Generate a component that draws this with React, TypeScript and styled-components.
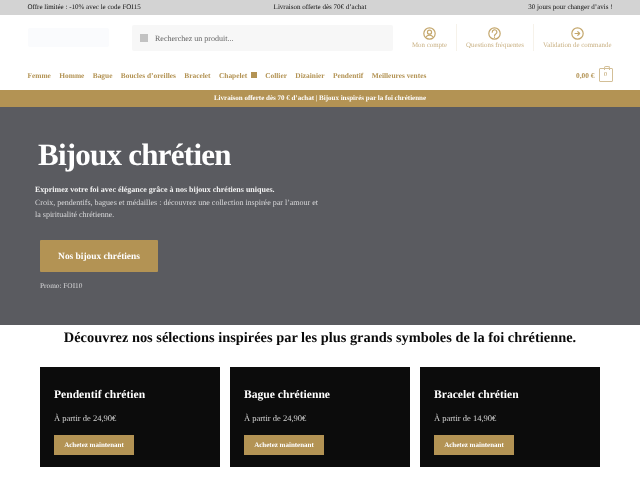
import React from "react";
import styled, { createGlobalStyle } from "styled-components";

const gold = "#b39354";

const Global = createGlobalStyle`
  html, body { margin: 0; padding: 0; background: #fff; height: 480px; overflow: hidden; }
  body { font-family: "Liberation Serif", "Times New Roman", serif; text-rendering: geometricPrecision; }
  * { box-sizing: border-box; }
`;

const Page = styled.div`
  width: 640px;
  height: 480px;
  overflow: hidden;
  filter: blur(0.3px);
`;

const TopBar = styled.div`
  height: 15px;
  background: #d3d3d3;
  padding: 0 27.5px;
  display: grid;
  grid-template-columns: 1fr 1fr 1fr;
  align-items: center;
  font-size: 7px;
  line-height: 15px;
  color: #111;
`;

const TopItem = styled.span<{ $align: string }>`
  text-align: ${(p) => p.$align};
`;

const Header = styled.div`
  height: 45px;
  padding: 9px 27.5px 0;
  display: flex;
  align-items: flex-start;
`;

const Logo = styled.div`
  width: 81px;
  height: 19px;
  margin-top: 4px;
  background: #fafbfd;
  border-radius: 2px;
`;

const Search = styled.div`
  width: 261px;
  height: 25.5px;
  margin: 1px 0 0 23.5px;
  background: #f7f7f7;
  border-radius: 2px;
  display: flex;
  align-items: center;
  padding-left: 8px;
  gap: 7px;
  font-size: 8px;
  color: #666;
`;

const SearchIcon = styled.span`
  width: 8px;
  height: 8px;
  background: #c2c2c2;
`;

const SearchText = styled.span`
  padding-top: 1px;
`;

const Links = styled.div`
  margin-left: auto;
  display: flex;
  height: 27px;
`;

const LinkItem = styled.div<{ $divided?: boolean }>`
  display: flex;
  flex-direction: column;
  align-items: center;
  padding: 2.5px 9px 0;
  border-left: ${(p) => (p.$divided ? "1px solid #f6f2ea" : "none")};
  font-size: 6.9px;
  line-height: 10px;
  color: #c9b184;
  gap: 1.5px;
  white-space: nowrap;
  &:last-child {
    padding-right: 1px;
  }
`;

const Nav = styled.div`
  height: 30px;
  padding: 0 27.5px;
  display: flex;
  align-items: center;
  font-size: 7.4px;
  font-weight: 700;
  color: ${gold};
  gap: 8.4px;
`;

const NavSquare = styled.span`
  display: inline-block;
  width: 6px;
  height: 6px;
  margin-left: 3.5px;
  background: ${gold};
`;

const Cart = styled.div`
  margin-left: auto;
  display: flex;
  align-items: center;
  gap: 4px;
`;

const Bag = styled.div`
  position: relative;
  width: 14px;
  height: 14px;
  border: 1px solid #d3bf97;
  border-radius: 1px;
  font-size: 6px;
  font-weight: 400;
  display: flex;
  align-items: center;
  justify-content: center;

  &::before {
    content: "";
    position: absolute;
    top: -3.5px;
    left: 4px;
    width: 4px;
    height: 3px;
    border: 1px solid #d3bf97;
    border-bottom: none;
    border-radius: 2px 2px 0 0;
  }
`;

const Promo = styled.div`
  height: 17px;
  background: ${gold};
  text-align: center;
  color: #fff;
  font-size: 7px;
  font-weight: 700;
  line-height: 17px;
`;

const Hero = styled.section`
  height: 218px;
  background: #5a5b60;
  padding-left: 35px;
  color: #fff;
`;

const Title = styled.h1`
  margin: 0;
  padding: 25.5px 0 0 3px;
  font-size: 31px;
  letter-spacing: -0.75px;
  line-height: 44px;
  font-weight: 700;
`;

const Lead = styled.p`
  margin: 7.3px 0 0;
  width: 290px;
  font-size: 8px;
  line-height: 12.8px;
  color: #d8d8da;
`;

const LeadStrong = styled.strong`
  color: #f2f2f2;
`;

const HeroButton = styled.div`
  margin: 18.2px 0 0 5px;
  width: 118px;
  height: 31.5px;
  padding-top: 1px;
  background: ${gold};
  border-radius: 1px;
  display: flex;
  align-items: center;
  justify-content: center;
  font-size: 9.4px;
  font-weight: 700;
`;

const PromoCode = styled.div`
  margin: 8px 0 0 5px;
  font-size: 7.3px;
  line-height: 11px;
  color: #d8d8da;
`;

const Heading = styled.h2`
  margin: 0;
  padding-top: 4px;
  height: 42.3px;
  text-align: center;
  font-size: 14.4px;
  line-height: 18px;
  font-weight: 700;
  color: #0a0a0a;
`;

const Cards = styled.div`
  display: grid;
  grid-template-columns: repeat(3, 180px);
  gap: 10px;
  padding: 0 40px;
`;

const Card = styled.div`
  height: 100px;
  background: #0c0c0c;
  padding: 18.5px 14px 0;
  color: #fff;
`;

const CardTitle = styled.h3`
  margin: 0;
  font-size: 11.6px;
  line-height: 17px;
  font-weight: 700;
`;

const CardPrice = styled.p`
  margin: 8px 0 0;
  font-size: 8.5px;
  line-height: 14px;
  color: #d5d5d5;
`;

const CardButton = styled.div`
  margin-top: 10.5px;
  width: 80px;
  height: 20px;
  background: ${gold};
  display: flex;
  align-items: center;
  justify-content: center;
  font-size: 7px;
  font-weight: 700;
`;

const Icon: React.FC<{ kind: string }> = ({ kind }) => (
  <svg width="13" height="13" viewBox="0 0 24 24" fill="none" stroke="#c4a76c" strokeWidth="2.2" strokeLinecap="round" strokeLinejoin="round">
    <circle cx="12" cy="12" r="10.500" />
    {kind === "user" && (
      <>
        <circle cx="12" cy="9.500" r="3.800" />
        <path d="M6.500 17.500c1.500-1.800 3.300-2.500 5.500-2.500s4 .7 5.500 2.500" />
      </>
    )}
    {kind === "help" && <path d="M7.800 9.500a4.300 4.300 0 1 1 6.500 3.600c-1.400.9-2.300 1.700-2.300 3.400M12 19v.1" />}
    {kind === "arrow" && <path d="M7.500 12h8.500M12.500 8.500L16 12l-3.500 3.500" />}
  </svg>
);

const navItems = ["Femme", "Homme", "Bague", "Boucles d’oreilles", "Bracelet"];
const navItems2 = ["Collier", "Dizainier", "Pendentif", "Meilleures ventes"];
const cards = [
  ["Pendentif chrétien", "À partir de 24,90€"],
  ["Bague chrétienne", "À partir de 24,90€"],
  ["Bracelet chrétien", "À partir de 14,90€"],
];

export default function App() {
  return (
    <Page>
      <Global />
      <TopBar>
        <TopItem $align="left">Offre limitée : -10% avec le code FOI15</TopItem>
        <TopItem $align="center">Livraison offerte dès 70€ d’achat</TopItem>
        <TopItem $align="right">30 jours pour changer d’avis !</TopItem>
      </TopBar>
      <Header>
        <Logo />
        <Search>
          <SearchIcon />
          <SearchText>Recherchez un produit...</SearchText>
        </Search>
        <Links>
          <LinkItem><Icon kind="user" />Mon compte</LinkItem>
          <LinkItem $divided><Icon kind="help" />Questions fréquentes</LinkItem>
          <LinkItem $divided><Icon kind="arrow" />Validation de commande</LinkItem>
        </Links>
      </Header>
      <Nav>
        {navItems.map((n) => <span key={n}>{n}</span>)}
        <span>Chapelet<NavSquare /></span>
        {navItems2.map((n) => <span key={n}>{n}</span>)}
        <Cart>0,00 €<Bag>0</Bag></Cart>
      </Nav>
      <Promo>Livraison offerte dès 70 € d’achat | Bijoux inspirés par la foi chrétienne</Promo>
      <Hero>
        <Title>Bijoux chrétien</Title>
        <Lead>
          <LeadStrong>Exprimez votre foi avec élégance grâce à nos bijoux chrétiens uniques.</LeadStrong>
          <br />
          Croix, pendentifs, bagues et médailles : découvrez une collection inspirée par l’amour et la spiritualité chrétienne.
        </Lead>
        <HeroButton>Nos bijoux chrétiens</HeroButton>
        <PromoCode>Promo: FOI10</PromoCode>
      </Hero>
      <Heading>Découvrez nos sélections inspirées par les plus grands symboles de la foi chrétienne.</Heading>
      <Cards>
        {cards.map(([t, p]) => (
          <Card key={t}>
            <CardTitle>{t}</CardTitle>
            <CardPrice>{p}</CardPrice>
            <CardButton>Achetez maintenant</CardButton>
          </Card>
        ))}
      </Cards>
    </Page>
  );
}
